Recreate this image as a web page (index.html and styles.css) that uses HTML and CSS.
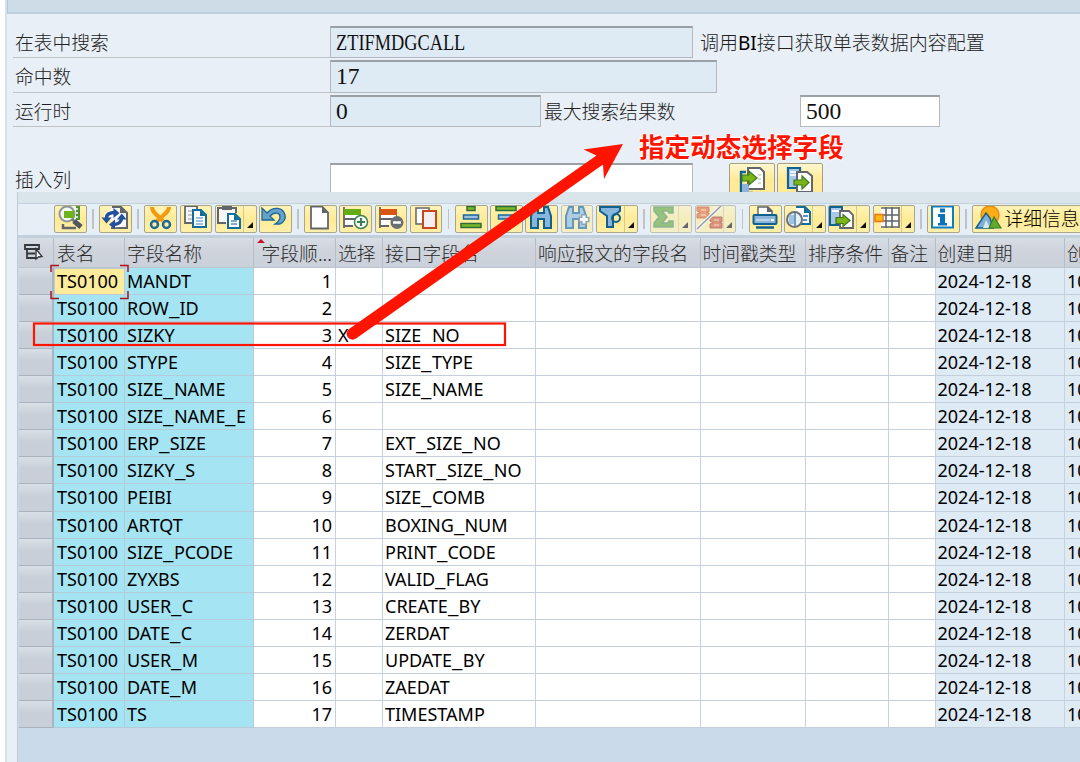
FILE: index.html
```html
<!DOCTYPE html>
<html lang="zh-CN">
  <head>
    <meta charset="UTF-8" />
    <meta name="viewport" content="width=device-width, initial-scale=1.0" />
    <title>ZTIFMDGCALL</title>
    <link rel="stylesheet" href="styles.css">
  </head>
  <body>
    <div class="window">
      <div class="topbar"></div>

      <div class="form">
        <div class="form-row">
          <label class="label">在表中搜索</label>
          <div class="field field--table"><span class="condensed">ZTIFMDGCALL</span></div>
          <span class="desc">调用<b>BI</b>接口获取单表数据内容配置</span>
        </div>
        <div class="form-row">
          <label class="label">命中数</label>
          <div class="field field--hits">17</div>
        </div>
        <div class="form-row">
          <label class="label">运行时</label>
          <div class="field field--runtime">0</div>
          <span class="max-label">最大搜索结果数</span>
          <div class="field field--max">500</div>
        </div>
        <div class="form-row form-row--insert">
          <label class="label label--plain">插入列</label>
          <div class="field field--insert"></div>
          <div class="insert-btn">
            <svg width="44" height="30" viewBox="0 0 44 30"><path d="M18 4h12l4 4v17H18z" fill="#fff" stroke="#62666a" stroke-width="2"/><path d="M28 11h3M28 15h3M28 19h3" stroke="#b5b5b5"/><path d="M16 8h-5v21h12" fill="none" stroke="#10628f" stroke-width="2.4"/><path d="M12 20h7v8h-7z" fill="#8fb4dc"/><path d="M12 11h7V7l8 7-8 7v-4h-7z" fill="#7cb518" stroke="#3d7a1d" stroke-width="1.2"/></svg>
          </div>
          <div class="insert-btn">
            <svg width="44" height="30" viewBox="0 0 44 30"><path d="M10 4h12v20H10z" fill="#a9c8e8" stroke="#10628f" stroke-width="2.2"/><path d="M12 8h7M12 11h7" stroke="#fff" stroke-width="1.5"/><path d="M19 8h10l5 4v16H19z" fill="#fff" stroke="#62666a" stroke-width="2"/><path d="M16 16h8v-4l7 6.5-7 6.5v-4h-8z" fill="#7cb518" stroke="#3d7a1d" stroke-width="1.2"/></svg>
          </div>
        </div>
      </div>

      <div class="grid">
        <div class="grid-strip"></div>
        <div class="toolbar">
          <button class="btn"><svg viewBox="0 0 32 27"><path d="M9 19v4h13" fill="none" stroke="#62666a" stroke-width="2.5"/><path d="M12 1h14v15H12z" fill="#f2f6ea"/><path d="M22 1h4v14h-4z" fill="#4f9130"/><path d="M21 4h3M21 8h3M21 12h3" stroke="#fff" stroke-width="1.5"/><circle cx="13" cy="9" r="7.5" fill="#f6faf0" stroke="#8f9699" stroke-width="2"/><path d="M10 6h10v7H10z" fill="#6eb31c"/><path d="M18 14l3 3" stroke="#77797c" stroke-width="2.5"/><path d="M20 16l7 6" stroke="#54585c" stroke-width="5"/></svg></button>
          <i class="sep"></i>
          <button class="btn"><svg viewBox="0 0 32 27"><path d="M12 2h10l6 6v15H12z" fill="#f6f6f6"/><path d="M13 2h9l6 6v15H12" fill="none" stroke="#62666a" stroke-width="2"/><path d="M21 1l7 7h-7z" fill="#62666a"/><path d="M7.500 15C7 10 11 7.500 16 7.500M23 12c.5 5-3 7.500-8 7.500" fill="none" stroke="#fff" stroke-width="6"/><path d="M7.500 13C7.500 9 11 7.500 16 7.500M22.500 13c0 4-3 6.500-8 6.500" fill="none" stroke="#234f9c" stroke-width="3.500"/><path d="M14.500 3l6 5-6 5zM16 14.500v10l-6-5zM2.500 12.500h10l-5 6zM18 14.500h9.500l-4.700-6z" fill="#234f9c"/></svg></button>
          <i class="sep"></i>
          <button class="btn"><svg viewBox="0 0 32 27"><path d="M8 2c0 5 4 7 11 14M25 2c0 5-5 7-12 14" fill="none" stroke="#f39a10" stroke-width="4"/><path d="M13 4h7l-3 6z" fill="#fff4b8"/><circle cx="10.500" cy="19.500" r="3.500" fill="none" stroke="#1a6798" stroke-width="2.500"/><circle cx="22.500" cy="19.500" r="3.500" fill="none" stroke="#1a6798" stroke-width="2.500"/></svg></button>
          <button class="btn"><svg viewBox="0 0 32 27"><path d="M12 18H5V1h12v4" fill="#f5f5f5" stroke="#62666a" stroke-width="1.800"/><path d="M8 6h4M8 10h4M8 14h4" stroke="#999"/><path d="M13 5h8l5 5v12H13z" fill="#fff" stroke="#126c9c" stroke-width="2"/><path d="M20 5v6h6" fill="#126c9c"/><path d="M16 13h7M16 16h7M16 19h7" stroke="#7fabd2" stroke-width="1.500"/></svg></button>
          <button class="btn btn--split"><svg viewBox="0 0 32 27"><path d="M11 18H3V3h18v5" fill="#f5f5f5" stroke="#62666a" stroke-width="2"/><path d="M7 1h10v4H7z" fill="#62666a"/><path d="M13 9h7l5 5v9H13z" fill="#fff" stroke="#126c9c" stroke-width="2"/><path d="M19 9v6h6" fill="#126c9c"/><path d="M16 16h6M16 19h6" stroke="#7fabd2" stroke-width="2"/></svg></button>
          <button class="btn"><svg viewBox="0 0 32 27"><path d="M3 3v12h12l-4-4c5-5 10-3 10 1 0 3-2 5-5 7h5c4-2 6-5 5-9C24 2 14 1 8 8z" fill="#64a1cb" stroke="#1b6796" stroke-width="1.300"/></svg></button>
          <i class="sep"></i>
          <button class="btn"><svg viewBox="0 0 32 27"><path d="M7 1.500h11l6 6v16H7z" fill="#fff" stroke="#62666a" stroke-width="1.800"/><path d="M18 1v7h7z" fill="#62666a"/></svg></button>
          <button class="btn"><svg viewBox="0 0 32 27"><path d="M5 2v21M5 14h12M5 21h9M21 10v3" fill="none" stroke="#62666a" stroke-width="1.800"/><path d="M6 10h15v3H6zM6 15h9v5H6z" fill="#fff"/><path d="M5 4h17v6H5z" fill="#65ab12"/><circle cx="22" cy="17" r="6.500" fill="#fff" stroke="#3c8051" stroke-width="1.500"/><path d="M22 13v8M18 17h8" stroke="#3c8051" stroke-width="2.200"/></svg></button>
          <button class="btn"><svg viewBox="0 0 32 27"><path d="M5 2v21M5 14h12M5 21h9M21 10v3" fill="none" stroke="#62666a" stroke-width="1.800"/><path d="M6 10h15v3H6zM6 15h9v5H6z" fill="#fff"/><path d="M5 4h17v6H5z" fill="#d85717"/><circle cx="22" cy="17.500" r="6.500" fill="#6b6f73"/><path d="M18 17.500h8" stroke="#fff" stroke-width="2.500"/></svg></button>
          <button class="btn"><svg viewBox="0 0 32 27"><path d="M6 3h13v16H6z" fill="#fff" stroke="#62666a" stroke-width="1.500"/><path d="M13 6h13v17H13z" fill="#f1efef" stroke="#c94420" stroke-width="2"/></svg></button>
          <i class="sep"></i>
          <button class="btn"><svg viewBox="0 0 32 27"><path d="M12 1.500h8v4h-8zM6 18.500h20v4H6z" fill="#79b82b" stroke="#2d6c38" stroke-width="1.500"/><path d="M8.500 10h15v4h-15z" fill="#9cc0e2" stroke="#1b6796" stroke-width="1.500"/></svg></button>
          <button class="btn"><svg viewBox="0 0 32 27"><path d="M6 1.500h20v4H6zM12 18.500h8v4h-8z" fill="#79b82b" stroke="#2d6c38" stroke-width="1.500"/><path d="M8.500 10h15v4h-15z" fill="#9cc0e2" stroke="#1b6796" stroke-width="1.500"/></svg></button>
          <button class="btn"><svg viewBox="0 0 32 27"><path d="M9 2h4v6h6V2h4l3 9v12h-7v-9h-6v9H6V11z" fill="#88b5dc" stroke="#12608e" stroke-width="2"/></svg></button>
          <button class="btn btn--off"><svg viewBox="0 0 32 27"><path d="M8 2h4v6h6V2h4l3 9v12h-7v-9h-6v9H5V11z" fill="#88b5dc" stroke="#12608e" stroke-width="2"/><path d="M23 9v11M17.500 14.500h11" stroke="#51708a" stroke-width="5.500"/><path d="M23 10.500v8M19 14.500h8" stroke="#fff" stroke-width="3"/></svg></button>
          <button class="btn btn--split"><svg viewBox="0 0 32 27"><path d="M4 2h20v4l-7 5v11h-6V11L4 6z" fill="#88b5dc" stroke="#12608e" stroke-width="2"/><circle cx="20" cy="13" r="4" fill="none" stroke="#12608e" stroke-width="2"/></svg></button>
          <i class="sep"></i>
          <button class="btn btn--split btn--off"><svg viewBox="0 0 32 27"><path d="M4 2h19v6h-4l-1-2h-6l5 6-5 6h6l1-2h4v6H4v-4l5-6-5-6z" fill="#62a72b" stroke="#4f8e55" stroke-width="1.500"/></svg></button>
          <button class="btn btn--split btn--off"><svg viewBox="0 0 32 27"><path d="M2 2h12v5h-2v1h2v5H2V9l3-1.500L2 6z" fill="#e66b25" stroke="#c94420"/><path d="M6 5h5M6 10h5" stroke="#f7c08a" stroke-width="1.500"/><path d="M15 12h12v5h-2v1h2v5H15v-4l3-1.500-3-1.500z" fill="#d9572b" stroke="#a03420"/><path d="M19 15h5M19 20h5" stroke="#f0a98a" stroke-width="1.500"/><path d="M2 24L26 1" stroke="#fff" stroke-width="3.500"/><path d="M2 24L26 1" stroke="#62666a" stroke-width="1.500"/></svg></button>
          <i class="sep"></i>
          <button class="btn"><svg viewBox="0 0 32 27"><path d="M9 9V2h10l4 4v4" fill="#fff" stroke="#62666a" stroke-width="1.500"/><path d="M18 1v6h6z" fill="#62666a"/><rect x="4.500" y="10" width="23" height="9" rx="1" fill="#8db6dc" stroke="#12608e" stroke-width="2"/><path d="M7 15h14" stroke="#c9dff2" stroke-width="1.500"/><path d="M22 15h3" stroke="#fff" stroke-width="2"/><path d="M7 22.500h18" stroke="#12608e" stroke-width="2.500"/></svg></button>
          <button class="btn btn--split"><svg viewBox="0 0 32 27"><path d="M12 2h9l5 5v12H14" fill="#fff" stroke="#126c9c" stroke-width="2"/><path d="M20 2v6h6" fill="#126c9c"/><path d="M19 11h5M19 15h4" stroke="#5e92c0" stroke-width="2"/><circle cx="10.500" cy="14.500" r="7.500" fill="#e9f1f8" stroke="#6d7276" stroke-width="2"/><path d="M5 10h5v9H5z" fill="#9fc3e4"/><path d="M11 8v13" stroke="#4b7fa8" stroke-width="1.500"/></svg></button>
          <button class="btn btn--split"><svg viewBox="0 0 32 27"><path d="M2 2h12v18H2z" fill="#a9c8e8" stroke="#10628f" stroke-width="2"/><path d="M4 6h8" stroke="#fff" stroke-width="2"/><path d="M12 6h9l4 4v13H12z" fill="#fff" stroke="#62666a" stroke-width="1.800"/><path d="M8 12.500h7v-3l7 6-7 6v-3H8z" fill="#7cb518" stroke="#3d7a1d" stroke-width="1.200"/></svg></button>
          <button class="btn btn--split"><svg viewBox="0 0 32 27"><path d="M8 3h18v19H8z" fill="#fff"/><path d="M8 3h18M8 10h18M8 16h18M8 22h18M13 2v21M19 2v21M26 2v21" stroke="#62666a" stroke-width="1.600"/><path d="M2 9.500h8v7H2z" fill="#fcba16" stroke="#ec7414" stroke-width="1.500"/></svg></button>
          <i class="sep"></i>
          <button class="btn"><svg viewBox="0 0 32 27"><path d="M5 1.500h21v21H5z" fill="#fff" stroke="#0c7fc3" stroke-width="2"/><path d="M13 3.500h5v4h-5zM11 9h7v9h2v2.500h-9V18h2v-6h-2z" fill="#0873b8"/></svg></button>
          <i class="sep"></i>
          <button class="btn btn--text"><svg viewBox="0 0 32 27"><circle cx="18" cy="10" r="9" fill="#fbae17" stroke="#f08a17" stroke-width="1.500"/><path d="M4 23L14 8l4 5 3 10z" fill="#7fb1d8" stroke="#14608e" stroke-width="1.500"/><path d="M11 23l3-8 4 8z" fill="#d8e8f5"/><path d="M17 23l5-11 7 11z" fill="#62a92c" stroke="#39802a" stroke-width="1.200"/></svg>详细信息</button>
        </div>

        <div class="row row--head">
          <div class="cell"><svg class="head-icon" viewBox="0 0 20 18"><path d="M1 2h14v4H1zM3 6v9h9M3 10.500h8" fill="none" stroke="#34383d" stroke-width="1.800"/><path d="M12 6v10l2.500-2 3.500-.5z" fill="#fff" stroke="#34383d" stroke-width="1.400"/></svg></div>
          <div class="cell">表名</div>
          <div class="cell">字段名称</div>
          <div class="cell cell--sorted">字段顺...</div>
          <div class="cell">选择</div>
          <div class="cell">接口字段名</div>
          <div class="cell">响应报文的字段名</div>
          <div class="cell">时间戳类型</div>
          <div class="cell">排序条件</div>
          <div class="cell">备注</div>
          <div class="cell">创建日期</div>
          <div class="cell">创</div>
        </div>
        <div id="rows"></div>
      </div>
    </div>

    <div class="note">指定动态选择字段</div>
    <svg class="marks" width="1080" height="762">
      <path d="M51 272v-6.500h8M120 265.500h8v6.500M51 291v7.500h8M120 298.500h8v-7.500" fill="none" stroke="#a8151b" stroke-width="1.500"/>
      <rect x="34" y="323.500" width="471" height="21.500" fill="none" stroke="#ff1400" stroke-width="2.200"/>
      <path d="M349 329L596.500 155.500 583.500 149.500 623 144 604 179 603 164.500 356 338.500A5.700 5.700 0 0 1 349 329z" fill="#ff1400"/>
    </svg>

    <script>
      // field name, selected, interface field
      const fields = [
        ["MANDT", "", ""],
        ["ROW_ID", "", ""],
        ["SIZKY", "X", "SIZE_NO"],
        ["STYPE", "", "SIZE_TYPE"],
        ["SIZE_NAME", "", "SIZE_NAME"],
        ["SIZE_NAME_E", "", ""],
        ["ERP_SIZE", "", "EXT_SIZE_NO"],
        ["SIZKY_S", "", "START_SIZE_NO"],
        ["PEIBI", "", "SIZE_COMB"],
        ["ARTQT", "", "BOXING_NUM"],
        ["SIZE_PCODE", "", "PRINT_CODE"],
        ["ZYXBS", "", "VALID_FLAG"],
        ["USER_C", "", "CREATE_BY"],
        ["DATE_C", "", "ZERDAT"],
        ["USER_M", "", "UPDATE_BY"],
        ["DATE_M", "", "ZAEDAT"],
        ["TS", "", "TIMESTAMP"],
      ];

      // widen the underscores to a full digit cell
      const code = (v) => String(v).replace(/_/g, '<i class="us">_</i>');

      document.getElementById("rows").innerHTML = fields
        .map(([name, selected, target], i) => {
          const values = ["", "TS0100", name, i + 1, selected, target, "", "", "", "", "2024-12-18", "10"];
          return `<div class="row">${values
            .map((v) => `<div class="cell">${code(v)}</div>`)
            .join("")}</div>`;
        })
        .join("");
    </script>
  </body>
</html>
```
FILE: styles.css
```css
* {
  box-sizing: border-box;
}

body {
  margin: 0;
  width: 1080px;
  height: 762px;
  overflow: hidden;
  position: relative;
  background: #fff;
  color: #111;
  font-family: "Noto Sans", "Noto Sans CJK SC", sans-serif;
}

.window {
  margin-left: 5px;
  height: 762px;
  border-left: 2px solid #d6e0ea;
  background: #e8eff6;
  display: flex;
  flex-direction: column;
}

.topbar {
  height: 14px;
  flex: none;
  background: #cedce7;
  border-left: 1px solid #b5c6d6;
  border-bottom: 2px solid #bfcfde;
}

.form {
  height: 178px;
  flex: none;
  overflow: hidden;
  padding: 12px 0 0 6px;
}

.form-row {
  display: flex;
  height: 32.4px;
  margin-bottom: 2px;
}

.form-row--insert {
  margin-top: 35.6px;
}

.label,
.desc,
.max-label {
  font-family: "Noto Sans CJK SC", sans-serif;
  font-size: 18.8px;
  font-weight: 300;
  line-height: 31px;
  color: #222;
  white-space: nowrap;
}

.label {
  width: 317px;
  padding-left: 2px;
  border-bottom: 1.5px solid #bfc3c6;
}

.label--plain {
  border-bottom: none;
}

.field {
  border: 1.5px solid #b5b9bd;
  border-top: 2px solid #9ba0a5;
  background: #deebf5;
  padding-left: 5px;
  font-family: "Liberation Serif", serif;
  font-size: 23.5px;
  line-height: 28px;
}

.condensed {
  display: inline-block;
  transform: scaleX(0.78);
  transform-origin: left;
}

.field--table {
  width: 363px;
}

.field--hits {
  width: 387px;
}

.field--runtime {
  width: 211px;
}

.field--max {
  width: 140px;
  background: #fff;
}

.field--insert {
  width: 363px;
  background: #fff;
  margin-right: 36px;
}

.desc {
  margin-left: 7px;
  font-size: 19px;
}

.desc b {
  font-family: "Noto Sans", sans-serif;
  font-weight: 400;
  color: #000;
}

.max-label {
  width: 259px;
  padding-left: 3px;
}

.insert-btn {
  width: 46px;
  margin-right: 1.5px;
  border: 1.5px solid #a79f80;
  border-radius: 2px;
  background: linear-gradient(#fff7d0, #ffeb97 50%);
}

.grid {
  flex: 1;
  margin-left: 10px;
  border-left: 1px solid #bccada;
  background: #cbdaea;
  overflow: hidden;
}

.grid-strip {
  height: 11px;
  background: #dae4eb;
}

.toolbar {
  display: flex;
  gap: 2.6px;
  height: 32px;
  padding: 1px 0 0 36px;
  background: #e6eff6;
  border-top: 1px solid #c5d2df;
}

.btn {
  flex: none;
  display: flex;
  width: 32.6px;
  height: 28px;
  padding: 0;
  overflow: hidden;
  border: 1.5px solid #aaa58d;
  border-radius: 2px;
  background: linear-gradient(#fff3b7, #ffeb97 50%, #ffefa9);
  position: relative;
}

.btn svg {
  flex: none;
  width: 32px;
  height: 27px;
  margin: -1px 0 0 -1px;
}

.btn--split {
  width: 41.8px;
  background: linear-gradient(#d9ca85, #d9ca85) 27px 0 / 1px 100% no-repeat, linear-gradient(#fff3b7, #ffeb97 50%, #ffefa9);
}

.btn--split::after {
  content: "";
  position: absolute;
  right: 3px;
  bottom: 4px;
  border-left: 6px solid transparent;
  border-bottom: 6px solid #111;
}

.btn--off {
  opacity: 0.6;
}

.btn--text {
  width: 130px;
  font-family: "Noto Sans CJK SC", sans-serif;
  font-size: 18.8px;
  font-weight: 300;
  line-height: 24px;
  white-space: nowrap;
}

.sep {
  flex: none;
  width: 1.4px;
  height: 20px;
  margin: 4px 3px 0;
  background: #bfc3c6;
}

.row {
  display: grid;
  grid-template-columns: 36px 71px 129px 82px 47px 153px 164.5px 105.5px 82.5px 47px 129.5px 80px;
  height: 27.12px;
}

.row--head {
  height: 32.6px;
  border-top: 3px solid #c2d0de;
}

.cell {
  padding-left: 2px;
  background: #fff;
  border-right: 1.5px solid #c8d2dd;
  border-bottom: 1.5px solid #c5cfdb;
  font-size: 18px;
  line-height: 26px;
  white-space: nowrap;
  color: #000;
}

.cell:nth-child(1) {
  margin-left: 1px;
  background: linear-gradient(#d9dfe7, #c9cfd8 45%);
  border-right: 2px solid #aab5c2;
  border-bottom-color: #aab3bd;
}

.cell:nth-child(2),
.cell:nth-child(3) {
  background: #a5e4f3;
  border-color: #b4ccd9;
}

.cell:nth-child(2) {
  padding-left: 3px;
}

.cell:nth-child(4) {
  text-align: right;
  padding-right: 3px;
}

.cell:nth-child(n + 11) {
  background: #deebf5;
}

#rows .row:first-child .cell:nth-child(2) {
  background: #ffeb9c;
  border: 1px solid #bdcad0;
  padding-left: 2px;
  line-height: 25px;
}

.us {
  display: inline-block;
  width: 10.6px;
  font-style: normal;
  transform: scaleX(1.3);
  transform-origin: left;
}

.row--head .cell:nth-child(n) {
  padding-left: 2px;
  background: linear-gradient(#d9dee5, #ced3dc 45%, #cbd1da);
  border-right: 1.5px solid #b4bdc8;
  border-bottom: 1px solid #b9c4cf;
  font-family: "Noto Sans CJK SC", sans-serif;
  font-size: 18.8px;
  font-weight: 300;
  line-height: 29px;
  color: #2b2b2b;
}

.row--head .cell:nth-child(2) {
  padding-left: 3px;
}

.row--head .cell--sorted {
  position: relative;
}

.cell--sorted::before {
  content: "";
  position: absolute;
  left: 3px;
  top: 1px;
  border: 4px solid transparent;
  border-top: none;
  border-bottom: 4px solid #c4122f;
}

.head-icon {
  width: 20px;
  height: 18px;
  margin: 5px 0 0 3px;
  display: block;
}

.note {
  position: absolute;
  left: 639px;
  top: 128px;
  font-family: "Noto Sans CJK SC", sans-serif;
  font-size: 25.6px;
  font-weight: 700;
  line-height: 36px;
  color: #ff1400;
  text-shadow: 0 0 2px #fff, 1px 1px 1px #fff, -1px -1px 1px #fff;
}

.marks {
  position: absolute;
  left: 0;
  top: 0;
}
```
